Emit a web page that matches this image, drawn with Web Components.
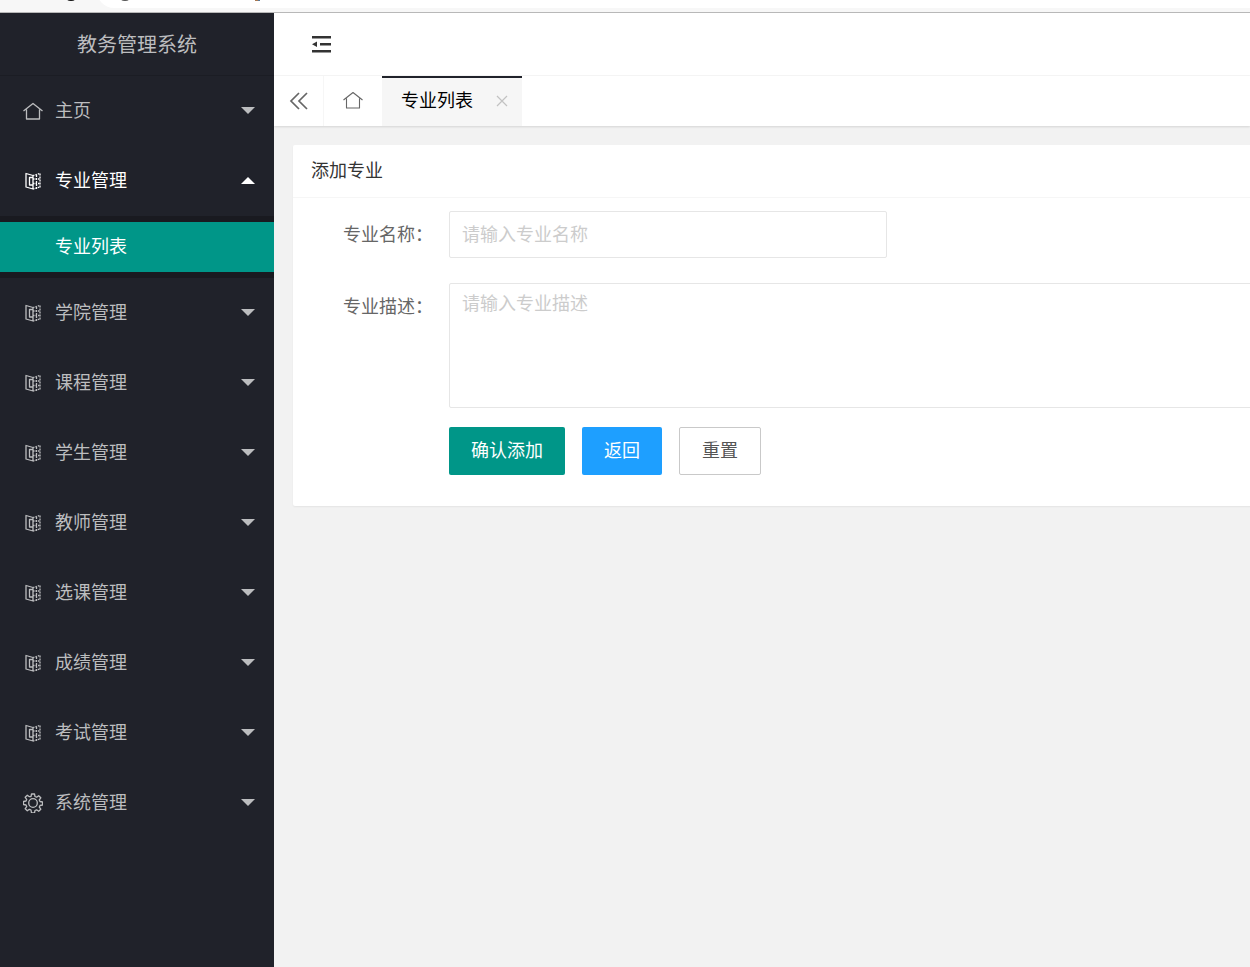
<!DOCTYPE html>
<html lang="zh-CN">
<head>
<meta charset="utf-8">
<title>教务管理系统</title>
<style>
html,body{margin:0;height:100%}
body{font:400 18px/24px "Noto Sans CJK SC",sans-serif;color:#666;background:#f2f2f2;overflow:hidden}
</style>
</head>
<body>
<app-shell>
  <browser-edge slot="top"></browser-edge>
  <side-nav slot="side" heading="教务管理系统">
    <nav-item icon="home">主页</nav-item>
    <nav-item icon="book" open>专业管理<a slot="sub" href="#list">专业列表</a></nav-item>
    <nav-item icon="book">学院管理</nav-item>
    <nav-item icon="book">课程管理</nav-item>
    <nav-item icon="book">学生管理</nav-item>
    <nav-item icon="book">教师管理</nav-item>
    <nav-item icon="book">选课管理</nav-item>
    <nav-item icon="book">成绩管理</nav-item>
    <nav-item icon="book">考试管理</nav-item>
    <nav-item icon="gear">系统管理</nav-item>
  </side-nav>
  <top-bar></top-bar>
  <tab-bar>专业列表</tab-bar>
  <form-card heading="添加专业"><major-form></major-form></form-card>
</app-shell>
<script>
const ICONS = {
  home: '<path d="M.5 10 10 2.500 19.500 10M3.500 8.500V18H16.500V8.500"/>',
  book: '<path d="M3 2.500V16L10 18V4.500ZM10 6.500H6.500V14H10"/><path stroke-dasharray="2 1" d="M13.500 4V18M17 2.500V17"/><path stroke-dasharray="1.500 1" d="M10 4.500 17 2.500M10 8H17M10 12.500H17M10 18 17 16"/>',
  gear: '<circle cx="10" cy="10" r="4.300"/><path d="M8.500 1h3l.5 2.500 1.600.7 2.100-1.500 2.100 2.100-1.500 2.100.7 1.600 2.500.5v3l-2.500.5-.7 1.600 1.500 2.100-2.100 2.100-2.100-1.500-1.600.7-.5 2.500h-3L8 17l-1.600-.7-2.100 1.500-2.100-2.100 1.500-2.100L3 12l-2.500-.5v-3L3 8l.7-1.600-1.500-2.100 2.100-2.100 2.100 1.500L8 3.500Z"/>'
};
const svg = (name, w = 1.3) => `<svg width="20" height="20" viewBox="0 0 20 20" fill="none" stroke="currentColor" stroke-width="${w}" stroke-linejoin="round" aria-hidden="true">${ICONS[name]}</svg>`;

function define(name, render) {
  customElements.define(name, class extends HTMLElement {
    connectedCallback() {
      if (this.shadowRoot) return;
      this.attachShadow({ mode: 'open' }).innerHTML = render(this);
    }
  });
}

define('app-shell', () => `
<style>
:host{display:flex;flex-direction:column;height:100vh}
.row{flex:1;display:grid;grid-template-columns:274px minmax(0,1fr);min-height:0}
main{overflow:hidden}
</style>
<slot name="top"></slot>
<div class="row"><slot name="side"></slot><main><slot></slot></main></div>`);

define('browser-edge', () => `
<style>
:host{display:block;background:#f7f7f7;border-bottom:1px solid #b8b8b8}
svg{display:block}
</style>
<svg width="100%" height="12" aria-hidden="true">
<rect x="97" y="-26" width="3000" height="34" rx="17" fill="#fff"/>
<ellipse cx="71" cy="-1" rx="4" ry="2" fill="#111"/>
<ellipse cx="125" cy="-1" rx="4" ry="2" fill="#555"/>
<path d="M255 0h3v1h-3z" fill="#a97850"/><path d="M258 0h2v1h-2z" fill="#56789a"/>
</svg>`);

define('side-nav', el => `
<style>
:host{display:block;background:#20222a;color:#bcbdbf}
h1{margin:0;height:63px;box-sizing:border-box;border-bottom:1px solid #1b1d24;font:inherit;font-size:20px;line-height:62px;text-align:center}
</style>
<nav><h1>${el.getAttribute('heading')}</h1><slot></slot></nav>`);

define('nav-item', el => `
<style>
:host{display:block}
:host([open]){color:#fff}
button{all:unset;box-sizing:border-box;display:flex;align-items:center;gap:12px;width:100%;height:70px;padding:0 19px 0 23px;cursor:pointer}
.text{flex:1;padding-bottom:4px}
.arrow{width:0;margin-bottom:2px;border:7px solid transparent;border-top-color:currentColor;border-bottom:0}
:host([open]) .arrow{border-top:0;border-bottom:7px solid currentColor}
.sub{display:none;background:#191a20;padding:6px 0}
:host([open]) .sub{display:block}
::slotted(a){display:block;padding:0 0 4px 55px;line-height:46px;background:#009688;color:#fff;text-decoration:none}
</style>
<button type="button">${svg(el.getAttribute('icon'))}<span class="text"><slot></slot></span><span class="arrow"></span></button>
<div class="sub"><slot name="sub"></slot></div>`);

define('top-bar', () => `
<style>
:host{display:flex;align-items:center;height:62px;padding-left:37px;background:#fff;border-bottom:1px solid #f6f6f6;color:#333}
button{all:unset;display:flex;cursor:pointer}
</style>
<button type="button" aria-label="收起菜单"><svg width="20" height="20" viewBox="0 0 20 20" fill="currentColor"><path d="M1 2h19v2.500H1zM9 9h11v2.500H9zM1 16h19v2.500H1zM1 10.200l5-2.700v5.400z"/></svg></button>`);

define('tab-bar', () => `
<style>
:host{display:flex;height:50px;background:#fff;box-shadow:0 1px 2px rgba(0,0,0,.12);color:#666}
button{all:unset;box-sizing:border-box;display:flex;align-items:center;justify-content:center;cursor:pointer}
.prev{width:50px;border-right:1px solid #f6f6f6}
.home{width:58px;padding-bottom:2px}
.tab{display:flex;align-items:center;box-sizing:border-box;width:140px;padding:0 14px 0 19px;justify-content:space-between;background:linear-gradient(#20222a 0 2px,#f6f6f6 2px);color:#000}
.text{padding-bottom:4px}
.close{color:#c2c2c2}
</style>
<button class="prev" type="button" aria-label="向左"><svg width="20" height="20" viewBox="0 0 20 20" fill="none" stroke="currentColor" stroke-width="1.700"><path d="M10 2 2 10l8 8M18 2l-8 8 8 8"/></svg></button>
<button class="home" type="button" aria-label="主页">${svg('home', 1.1)}</button>
<div class="tab"><span class="text"><slot></slot></span><button class="close" type="button" aria-label="关闭"><svg width="12" height="12" viewBox="0 0 12 12" stroke="currentColor" stroke-width="1.200"><path d="M1 1 11 11M11 1 1 11"/></svg></button></div>`);

define('form-card', el => `
<style>
:host{display:block;margin:19px -38px 0 19px;background:#fff;border-radius:2px;box-shadow:0 1px 2px rgba(0,0,0,.06)}
h2{margin:0;padding:0 18px 4px;font:inherit;line-height:48px;color:#333;border-bottom:1px solid #f6f6f6}
.body{padding:13px 19px 31px}
</style>
<h2>${el.getAttribute('heading')}</h2><div class="body"><slot></slot></div>`);

define('major-form', () => `
<style>
:host{display:block}
form{display:grid;grid-template-columns:137px minmax(0,1fr);row-gap:25px}
label{padding-right:16px;line-height:44px;text-align:right}
input,textarea{box-sizing:border-box;margin:0;border:1px solid #e6e6e6;border-radius:2px;background:#fff;color:#333;font:inherit;outline:0}
input{width:438px;height:47px;padding:0 12px 4px}
textarea{display:block;width:100%;height:125px;padding:6px 12px;resize:none}
::placeholder{color:#ccc;opacity:1}
.actions{grid-column:2;display:flex;gap:17px;margin-top:-6px}
button{box-sizing:border-box;height:48px;padding:0 22px 4px;border:0;border-radius:2px;background:#009688;color:#fff;font:inherit;cursor:pointer}
.back{background:#1e9fff}
.reset{background:#fff;color:#555;border:1px solid #c9c9c9}
</style>
<form>
<label for="n">专业名称：</label><input id="n" placeholder="请输入专业名称">
<label for="d">专业描述：</label><textarea id="d" placeholder="请输入专业描述"></textarea>
<div class="actions"><button type="button">确认添加</button><button type="button" class="back">返回</button><button type="reset" class="reset">重置</button></div>
</form>`);
</script>
</body>
</html>
